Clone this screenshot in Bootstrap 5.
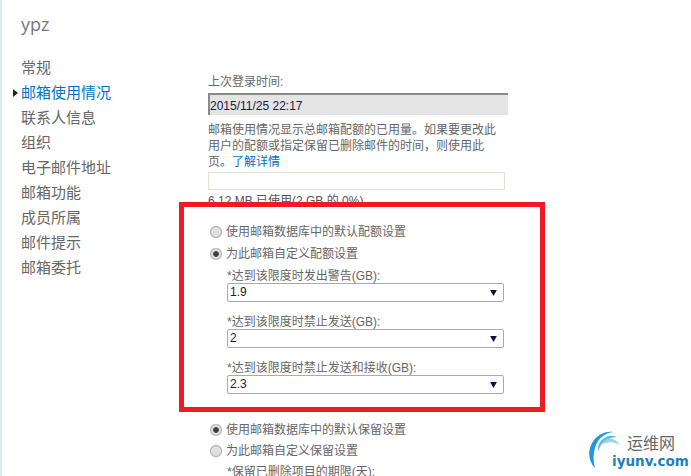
<!DOCTYPE html>
<html lang="zh-CN">
<head>
    <meta charset="UTF-8">
    <meta name="viewport" content="width=device-width, initial-scale=1.0">
    <title>ypz</title>
    <link href="https://cdn.jsdelivr.net/npm/bootstrap@5.3.0/dist/css/bootstrap.min.css" rel="stylesheet">
    <style>
        html, body {
            height: 476px;
            overflow: hidden;
        }

        body {
            font-family: "Liberation Sans", "Noto Sans CJK SC", sans-serif;
            font-size: 12px;
            line-height: 16px;
            color: #666;
            background: #fff;
            border-left: 2px solid #dcebf5;
            position: relative;
        }

        .side-col {
            width: 206px;
            flex: none;
            padding: 12px 0 0 19px;
        }

        .user-name {
            font-family: "Open Sans", sans-serif;
            font-size: 18px;
            line-height: 24px;
            color: #777;
            margin-bottom: 19px;
        }

        .side-link {
            display: block;
            position: relative;
            font-size: 15px;
            line-height: 25px;
            color: #666;
            text-decoration: none;
        }

        .side-link.current {
            color: #0072c6;
        }

        .side-link.current::before {
            content: "";
            position: absolute;
            left: -8px;
            top: 9px;
            border-left: 5px solid #222;
            border-top: 4px solid transparent;
            border-bottom: 4px solid transparent;
        }

        .main-col {
            width: 300px;
            flex: none;
            padding-top: 74px;
        }

        .login-time {
            height: 22px;
            width: 300px;
            margin: 3px 0 7px;
            padding: 2px 0 0 0;
            color: #1a1a3a;
            font-size: 12px;
            line-height: 18px;
            background: #e4e4e4;
            border-top: 2px solid #8a8a8a;
            border-left: 2px solid #8a8a8a;
        }

        .info-text a {
            color: #0072c6;
            text-decoration: none;
        }

        .usage-bar {
            width: 297px;
            height: 18px;
            margin-top: 2px;
            border: 1px solid #e6dfd2;
        }

        .usage-text {
            margin-top: 3px;
            color: #555;
            height: 16px;
        }

        .red-frame {
            position: relative;
            width: 366px;
            height: 210px;
            margin: -7px 0 7px -29px;
            padding: 14px 0 0 42px;
            background: #fff;
            border: 5px solid #ed1c24;
        }

        .radio-row {
            display: flex;
            align-items: center;
            gap: 4px;
            height: 22px;
            margin: 0 0 0 -16px;
            font-size: 12px;
            color: #666;
        }

        .radio-row .form-check-input {
            width: 12px;
            height: 12px;
            margin: 0;
            float: none;
            flex: none;
            border: 1px solid #b4b4b4;
            background-color: #dedede;
            background-image: none;
            box-shadow: 0 0 1px #bbb;
        }

        .radio-row .form-check-input:checked {
            background-color: #dedede;
            border-color: #b4b4b4;
            background-image: radial-gradient(circle, #444 0, #444 2.5px, #dedede 3.2px);
        }

        .radio-row + .limit-label {
            margin-top: 2px;
        }

        .limit-label {
            display: block;
            height: 16px;
            margin: 0;
            padding: 1px 0 0 1px;
            color: #666;
        }

        .limit-select {
            width: 277px;
            height: 19px;
            min-height: 0;
            margin: 0 0 11px 1px;
            padding: 0 0 0 2px;
            font-size: 12px;
            line-height: 17px;
            color: #1a1a3a;
            border: 1px solid #aaa;
            border-radius: 2px;
            background-position: right 6px center;
            background-size: 7px 6px;
            background-image: url("data:image/svg+xml,%3Csvg xmlns='http://www.w3.org/2000/svg' viewBox='0 0 9 8'%3E%3Cpath d='M0 0h9L4.5 8z' fill='%23101040'/%3E%3C/svg%3E");
        }

        .keep-block {
            padding-left: 18px;
        }

        .keep-block .radio-row {
            height: 21px;
        }

        .site-logo {
            position: absolute;
            right: 3px;
            bottom: 6px;
            width: 116px;
            height: 58px;
        }

        .site-logo svg {
            position: absolute;
            left: 16px;
            top: 19px;
        }

        .logo-cn {
            position: absolute;
            left: 55px;
            top: 22px;
            font-size: 16px;
            line-height: 20px;
            color: #666;
        }

        .logo-en {
            position: absolute;
            left: 40px;
            top: 39px;
            font-family: "DejaVu Sans", sans-serif;
            font-size: 13.5px;
            line-height: 20px;
            font-weight: 700;
            color: #1d7fc0;
        }
    </style>
</head>
<body>
    <div class="d-flex">
        <!-- Sidebar -->
        <nav class="side-col">
            <div class="user-name">ypz</div>
            <a class="side-link" href="#">常规</a>
            <a class="side-link current" href="#">邮箱使用情况</a>
            <a class="side-link" href="#">联系人信息</a>
            <a class="side-link" href="#">组织</a>
            <a class="side-link" href="#">电子邮件地址</a>
            <a class="side-link" href="#">邮箱功能</a>
            <a class="side-link" href="#">成员所属</a>
            <a class="side-link" href="#">邮件提示</a>
            <a class="side-link" href="#">邮箱委托</a>
        </nav>

        <!-- Form -->
        <main class="main-col">
            <div>上次登录时间:</div>
            <div class="login-time">2015/11/25 22:17</div>
            <div class="info-text">邮箱使用情况显示总邮箱配额的已用量。如果要更改此<br>用户的配额或指定保留已删除邮件的时间，则使用此<br>页。<a href="#">了解详情</a></div>
            <div class="usage-bar"></div>
            <div class="usage-text">6.12 MB 已使用(2 GB 的 0%)。</div>

            <div class="red-frame">
                <label class="radio-row"><input class="form-check-input" type="radio" name="quota">使用邮箱数据库中的默认配额设置</label>
                <label class="radio-row"><input class="form-check-input" type="radio" name="quota" checked>为此邮箱自定义配额设置</label>
                <label class="limit-label">*达到该限度时发出警告(GB):</label>
                <select class="form-select limit-select"><option>1.9</option></select>
                <label class="limit-label">*达到该限度时禁止发送(GB):</label>
                <select class="form-select limit-select"><option>2</option></select>
                <label class="limit-label">*达到该限度时禁止发送和接收(GB):</label>
                <select class="form-select limit-select"><option>2.3</option></select>
            </div>

            <div class="keep-block">
                <label class="radio-row"><input class="form-check-input" type="radio" name="keep" checked>使用邮箱数据库中的默认保留设置</label>
                <label class="radio-row"><input class="form-check-input" type="radio" name="keep">为此邮箱自定义保留设置</label>
                <label class="limit-label">*保留已删除项目的期限(天):</label>
            </div>
        </main>
    </div>

    <!-- Watermark -->
    <div class="site-logo">
        <svg width="34" height="38" viewBox="0 0 34 38">
            <path d="M7 37C0 30-1 18 6 9 11 3 18 0 25 1 17 2 11 7 8 14 5 22 5 30 7 37Z" fill="#1e9ad6"/>
            <path d="M11 13C15 6 22 3 29 6 23 6 17 9 13 14 12 16 11 18 10 20 10 17 10 15 11 13Z" fill="#5cb8e4"/>
            <path d="M17 9C22 6 28 8 32 14 27 11 22 10 15 13Z" fill="#9ad2ee"/>
        </svg>
        <div class="logo-cn">运维网</div>
        <div class="logo-en">iyunv.com</div>
    </div>

    <script src="https://cdn.jsdelivr.net/npm/bootstrap@5.3.0/dist/js/bootstrap.bundle.min.js"></script>
</body>
</html>
